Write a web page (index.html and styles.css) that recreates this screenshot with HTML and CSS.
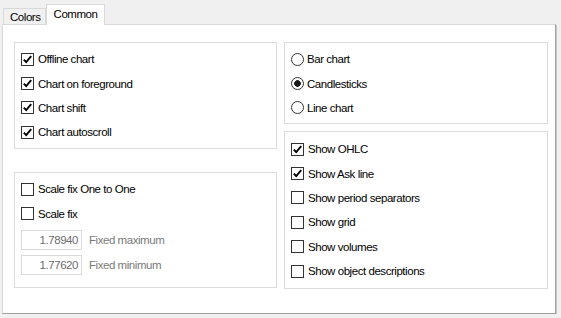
FILE: index.html
```html
<!DOCTYPE html>
<html lang="en">
<head>
    <meta charset="UTF-8">
    <title>Chart properties</title>
    <link rel="stylesheet" href="styles.css">
</head>
<body>

<div class="window">
    <div class="tabs">
        <div class="tab">Colors</div>
        <div class="tab active">Common</div>
    </div>

    <div class="panel">
        <div class="column">
            <div class="group group-chart">
                <label class="row"><span class="check on"></span>Offline chart</label>
                <label class="row"><span class="check on"></span>Chart on foreground</label>
                <label class="row"><span class="check on"></span>Chart shift</label>
                <label class="row"><span class="check on"></span>Chart autoscroll</label>
            </div>

            <div class="group group-scale">
                <label class="row"><span class="check"></span>Scale fix One to One</label>
                <label class="row"><span class="check"></span>Scale fix</label>
                <div class="field">
                    <span class="input">1.78940</span>
                    <span class="field-label">Fixed maximum</span>
                </div>
                <div class="field">
                    <span class="input">1.77620</span>
                    <span class="field-label">Fixed minimum</span>
                </div>
            </div>
        </div>

        <div class="column">
            <div class="group group-type">
                <label class="row"><span class="radio"></span>Bar chart</label>
                <label class="row"><span class="radio on"></span>Candlesticks</label>
                <label class="row"><span class="radio"></span>Line chart</label>
            </div>

            <div class="group group-show">
                <label class="row"><span class="check on"></span>Show OHLC</label>
                <label class="row"><span class="check on"></span>Show Ask line</label>
                <label class="row"><span class="check"></span>Show period separators</label>
                <label class="row"><span class="check"></span>Show grid</label>
                <label class="row"><span class="check"></span>Show volumes</label>
                <label class="row"><span class="check"></span>Show object descriptions</label>
            </div>
        </div>
    </div>
</div>

</body>
</html>
```

FILE: styles.css
```css
body {
    margin: 0;
    background-color: #f0f0f0;
    font-family: "Liberation Sans", Arial, sans-serif;
    font-size: 11.5px;
    letter-spacing: -0.45px;
    color: #000;
}
.window {
    padding: 5px 5px 0 2px;
}
.tabs {
    display: flex;
    align-items: flex-end;
    height: 19px;
    padding-left: 1px;
}
.tab {
    height: 15px;
    line-height: 16px;
    padding: 0 4px 0 6px;
    border: 1px solid #d9d9d9;
    border-bottom: none;
    background-color: #f0f0f0;
}
.tab.active {
    position: relative;
    z-index: 1;
    height: 20px;
    line-height: 18px;
    margin-bottom: -1px;
    padding: 0 7px 0 7px;
    background-color: #fff;
}
.panel {
    display: grid;
    grid-template-columns: 263px 264px;
    gap: 7px;
    height: 271px;
    padding: 17px 0 0 11px;
    background-color: #fff;
    border: 1px solid #d9d9d9;
    border-right-color: #a0a0a0;
    border-bottom-color: #a0a0a0;
    box-shadow: 1px 1px 0 #c8c8c8;
}
.column {
    display: flex;
    flex-direction: column;
}
.group {
    box-sizing: border-box;
    border: 1px solid #dcdcdc;
    padding-left: 6px;
}
.group-chart {
    height: 107px;
    padding-top: 4px;
}
.group-scale {
    height: 116px;
    margin-top: 23px;
    padding-top: 4px;
}
.group-type {
    height: 82px;
    padding-top: 4px;
}
.group-show {
    height: 158px;
    margin-top: 7px;
    padding-top: 5px;
}
.row {
    display: flex;
    align-items: center;
    height: 24.4px;
}
.check {
    box-sizing: border-box;
    width: 13px;
    height: 13px;
    margin-right: 4px;
    border: 1px solid #333;
    background: #fff center no-repeat;
}
.check.on {
    background-image: url("data:image/svg+xml,%3Csvg xmlns='http://www.w3.org/2000/svg' width='11' height='11' viewBox='0 0 11 11'%3E%3Cpath d='M1.8 5.6 L4.2 8 L9.2 2.2' fill='none' stroke='%23000' stroke-width='1.9'/%3E%3C/svg%3E");
}
.radio {
    box-sizing: border-box;
    width: 13px;
    height: 13px;
    margin-right: 3px;
    border: 1px solid #333;
    border-radius: 50%;
    background-color: #fff;
}
.radio.on {
    background-image: radial-gradient(circle, #1a1a1a 3px, transparent 3.6px);
}
.field {
    display: flex;
    align-items: center;
    margin-top: 4px;
    margin-bottom: 5px;
}
.field + .field {
    margin-top: 0;
}
.input {
    box-sizing: border-box;
    width: 61px;
    height: 20px;
    line-height: 18px;
    padding-right: 3px;
    border: 1px solid #d9d9d9;
    text-align: right;
    color: #6d6d6d;
}
.field-label {
    margin-left: 7px;
    color: #7a7a7a;
}
```
